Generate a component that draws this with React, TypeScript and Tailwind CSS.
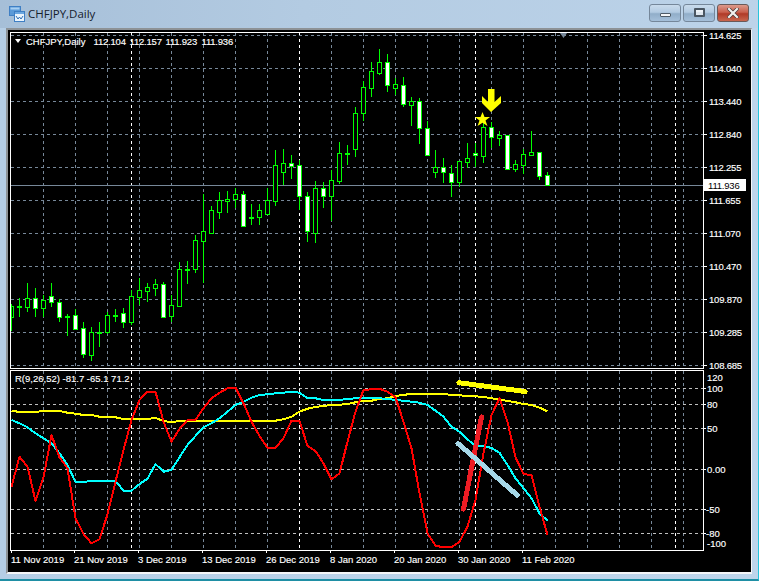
const candles: [number, number, number, number, number?][] = [
  [304, 331, 306, 317, 0], [298, 317, 306, 306, 0], [283, 312, 298, 307, 0], [288, 317, 298, 308, 1],
  [295, 317, 300, 308, 0], [283, 307, 296, 302, 1], [299, 322, 302, 317, 1], [314, 336, 316, 316, 0],
  [309, 330, 315, 329, 1], [322, 358, 328, 354, 1], [327, 361, 332, 355, 0], [322, 347, 332, 332, 0],
  [312, 334, 315, 332, 0], [309, 322, 315, 315, 0], [308, 328, 313, 322, 1], [290, 325, 296, 322, 0],
  [278, 305, 290, 297, 0], [283, 302, 287, 291, 0], [279, 296, 284, 288, 0], [282, 317, 284, 317, 1],
  [295, 322, 305, 316, 0], [262, 307, 269, 306, 0], [261, 284, 269, 269, 0], [235, 273, 240, 269, 0],
  [194, 283, 231, 241, 0], [206, 233, 210, 233, 0], [192, 219, 200, 212, 0], [191, 213, 199, 201, 0],
  [188, 208, 194, 199, 0], [191, 227, 194, 226, 1], [204, 225, 217, 217, 0], [204, 225, 210, 217, 0],
  [188, 215, 200, 214, 0], [150, 206, 165, 201, 0], [149, 185, 163, 172, 0], [155, 179, 163, 166, 1],
  [160, 210, 165, 196, 1], [192, 242, 196, 231, 1], [181, 243, 188, 233, 0], [182, 208, 188, 196, 1],
  [170, 221, 180, 196, 0], [142, 184, 153, 181, 0], [145, 165, 153, 153, 0], [107, 157, 113, 149, 0],
  [81, 121, 87, 113, 0], [62, 97, 71, 88, 0], [49, 75, 62, 73, 0], [54, 92, 62, 85, 1],
  [78, 95, 84, 88, 0], [77, 107, 85, 104, 1], [97, 126, 101, 105, 0], [98, 144, 101, 128, 1],
  [121, 155, 128, 155, 1], [150, 178, 167, 172, 0], [158, 183, 167, 172, 1], [165, 197, 173, 182, 1],
  [161, 187, 161, 182, 0], [143, 168, 158, 162, 0], [143, 167, 153, 155, 1], [122, 163, 127, 156, 0],
  [122, 148, 127, 137, 1], [131, 146, 135, 138, 0], [135, 169, 135, 169, 1], [160, 172, 164, 169, 0],
  [149, 174, 154, 165, 0], [131, 156, 152, 155, 0], [152, 180, 152, 176, 1], [172, 185, 175, 185, 1],
];

const red = [350, 260, 290, 393, 322, 195, 262, 295, 445, 492, 520, 508, 433, 335, 240, 150, 90, 65, 65, 155, 215, 177, 150, 150, 115, 85, 68, 55, 53, 100, 155, 198, 233, 233, 205, 152, 152, 228, 243, 280, 328, 310, 215, 125, 60, 58, 56, 65, 82, 155, 235, 370, 490, 527, 532, 532, 515, 470, 390, 250, 135, 85, 155, 262, 312, 316, 410, 495];
const cyan = [150, 160, 172, 190, 205, 220, 250, 285, 336, 336, 333, 332, 332, 332, 362, 362, 342, 326, 282, 305, 300, 262, 225, 198, 172, 160, 145, 125, 105, 95, 83, 75, 73, 70, 68, 65, 68, 85, 85, 90, 90, 90, 87, 85, 85, 85, 85, 87, 90, 92, 95, 98, 105, 122, 140, 170, 185, 208, 228, 228, 234, 248, 285, 325, 355, 385, 430, 452];
const yellow = [122, 126, 126, 126, 123, 122, 123, 128, 131, 135, 135, 140, 141, 142, 147, 147, 147, 147, 144, 153, 157, 153, 152, 152, 152, 152, 152, 152, 152, 152, 152, 152, 152, 152, 148, 140, 125, 116, 111, 108, 105, 104, 102, 97, 93, 92, 87, 85, 78, 75, 71, 71, 71, 71, 72, 75, 76, 78, 79, 81, 85, 88, 93, 97, 102, 105, 113, 124];

const pts = (vals: number[]) => vals.map((v, i) => `${11.5 + 8 * i},${(370 + v / 3).toFixed(1)}`).join(" ");

const gridX = Array.from({ length: 21 }, (_, i) => 43 + 32 * i);
const sepX = [131, 299, 475, 675];
const prices: [string, number][] = [
  ["114.625", 35], ["114.040", 68], ["113.440", 101], ["112.840", 134], ["112.255", 167], ["111.655", 200],
  ["111.070", 233], ["110.470", 266], ["109.870", 299], ["109.285", 332], ["108.685", 365],
];
const levels: [string, number, number][] = [
  ["100", 388, 707], ["80", 404, 707], ["50", 428, 707], ["0.00", 469, 707], ["-50", 509, 706], ["-80", 533, 706],
];
const dates: [string, number][] = [
  ["11 Nov 2019", 11], ["21 Nov 2019", 74], ["3 Dec 2019", 138], ["13 Dec 2019", 202], ["26 Dec 2019", 266],
  ["8 Jan 2020", 330], ["20 Jan 2020", 394], ["30 Jan 2020", 458], ["11 Feb 2020", 522],
];

function VerticalGrid({ y1, y2 }: { y1: number; y2: number }) {
  return (
    <g shapeRendering="crispEdges">
      {gridX.map((x) => (
        <line key={x} x1={x + 0.5} x2={x + 0.5} y1={y1} y2={y2} stroke="#778899" strokeDasharray="3 3" />
      ))}
      {sepX.map((x) => (
        <line key={x} x1={x + 0.5} x2={x + 0.5} y1={y1} y2={y2} stroke="#ffffff" strokeDasharray="3 3" />
      ))}
    </g>
  );
}

function PricePanel() {
  return (
    <svg className="block w-[742px] h-[339px] shrink-0 font-['Liberation_Sans',sans-serif] text-[9.5px]" viewBox="8 30 742 339">
      <VerticalGrid y1={33} y2={368} />
      <g shapeRendering="crispEdges">
        {prices.map(([, y]) => (
          <line key={y} x1={11} x2={703} y1={y + 0.5} y2={y + 0.5} stroke="#778899" strokeDasharray="3 3" />
        ))}
        <line x1={11} x2={703} y1={185.5} y2={185.5} stroke="#778899" />
        {candles.map(([wt, wb, bt, bb, fill], i) => {
          const x = 11 + 8 * i;
          const left = Math.max(x - 2, 11);
          const w = x + 2 - left;
          return (
            <g key={i}>
              <line x1={x + 0.5} x2={x + 0.5} y1={wt} y2={wb} stroke="#00ff00" />
              {bb - bt < 1 ? (
                <rect x={left} y={bt} width={5} height={2} fill="#00ff00" />
              ) : (
                <rect x={left + 0.5} y={bt + 0.5} width={w} height={bb - bt} fill={fill ? "#ffffff" : "#000000"} stroke="#00ff00" />
              )}
            </g>
          );
        })}
        <rect x={10.5} y={32.5} width={693} height={335.5} fill="none" stroke="#ffffff" />
        {prices.map(([, y]) => (
          <line key={y} x1={704} x2={707} y1={y + 0.5} y2={y + 0.5} stroke="#ffffff" />
        ))}
      </g>
      <polygon points="15,39 21,39 18,43" fill="#ffffff" />
      <g fill="#ffffff" stroke="#ffffff" strokeWidth={0.15}>
        <text x={26} y={44.5}>CHFJPY,Daily</text>
        <g className="tracking-[-0.2px]">
          <text x={93.5} y={44.5}>112.104</text>
          <text x={129.5} y={44.5}>112.157</text>
          <text x={165.5} y={44.5}>111.923</text>
          <text x={201.5} y={44.5}>111.936</text>
          {prices.map(([label, y]) => (
            <text key={y} x={709} y={y + 3.5}>{label}</text>
          ))}
        </g>
      </g>
      <polygon points="560,33 567,33 563.5,38" fill="#778899" />
      <polygon points="488,89 494.5,89 494.5,102 501,96 501,103 491,112 482,103 482,96 488,102" fill="#ffff00" />
      <polygon points="482.5,112 484.5,117 490,117 485.5,120.5 487.5,126 482.5,122.7 477.5,126 479.5,120.5 475,117 480.5,117" fill="#ffff00" />
      <rect x={704} y={179} width={42} height={12} fill="#ffffff" />
      <text x={708} y={188.5} fill="#000000" className="tracking-[-0.2px]">111.936</text>
    </svg>
  );
}

function IndicatorPanel() {
  return (
    <svg className="block w-[742px] h-[203px] shrink-0 font-['Liberation_Sans',sans-serif] text-[9.5px]" viewBox="8 369 742 203">
      <VerticalGrid y1={371} y2={550} />
      <g shapeRendering="crispEdges">
        {levels.map(([, y]) => (
          <line key={y} x1={11} x2={703} y1={y + 0.5} y2={y + 0.5} stroke="#c0c0c0" strokeDasharray="3 3" />
        ))}
      </g>
      <g fill="none" strokeWidth={2} shapeRendering="crispEdges" strokeLinejoin="round">
        <polyline points={pts(yellow)} stroke="#ffff00" />
        <polyline points={pts(cyan)} stroke="#00ffff" />
        <polyline points={pts(red)} stroke="#ff0000" />
      </g>
      <g strokeWidth={5} strokeLinecap="round" shapeRendering="crispEdges">
        <line x1={459} y1={382.7} x2={525} y2={391.5} stroke="#ffff00" />
        <line x1={481.5} y1={417} x2={463.5} y2={509} stroke="#ed1c24" />
        <line x1={458} y1={443.5} x2={517} y2={495} stroke="#a6d8e8" />
      </g>
      <g shapeRendering="crispEdges">
        <rect x={10.5} y={370.5} width={693} height={179.5} fill="none" stroke="#ffffff" />
        {levels.map(([, y]) => (
          <line key={y} x1={704} x2={706} y1={y + 0.5} y2={y + 0.5} stroke="#ffffff" />
        ))}
        {dates.map(([, x]) => (
          <line key={x} x1={x + 0.5} x2={x + 0.5} y1={550} y2={553} stroke="#ffffff" />
        ))}
      </g>
      <g fill="#ffffff" stroke="#ffffff" strokeWidth={0.15}>
        <text x={15} y={382}>R(9,26,52) -81.7 -65.1 71.2</text>
        <text x={707} y={381}>120</text>
        {levels.map(([label, y, x]) => (
          <text key={y} x={x} y={y + 4}>{label}</text>
        ))}
        <text x={707} y={547}>-100</text>
        {dates.map(([label, x]) => (
          <text key={x} x={x} y={563}>{label}</text>
        ))}
      </g>
    </svg>
  );
}

function TitleIcon() {
  return (
    <svg className="w-[16px] h-[16px] shrink-0" viewBox="0 0 16 16">
      <rect x={0.5} y={0.5} width={11} height={9} fill="#5b9ad8" stroke="#3f7fc4" />
      <rect x={1.5} y={1.5} width={9} height={2} fill="#a9d0f2" />
      <rect x={5.5} y={5.5} width={10} height={10} fill="#eaf4fd" stroke="#3f7fc4" />
      <rect x={6} y={6} width={9} height={2} fill="#6ba7e0" />
      <path d="M7 10 L9 13 L10.5 11 L12 13 L14 10" fill="none" stroke="#2f6fb5" />
    </svg>
  );
}

function WinButton({ kind }: { kind: "min" | "max" | "close" }) {
  if (kind === "close") {
    return (
      <div className="w-[32px] h-[18px] rounded-[3px] border border-[#6a5a5a] bg-[linear-gradient(#dc9a8c_0%,#c9604e_45%,#b03a28_55%,#c8664e_100%)] flex items-center justify-center">
        <svg className="w-[12px] h-[10px]" viewBox="0 0 12 10">
          <path d="M2 1 L10 9 M10 1 L2 9" stroke="#4a3a3a" strokeWidth={3.6} strokeLinecap="square" />
          <path d="M2 1 L10 9 M10 1 L2 9" stroke="#f0f0ee" strokeWidth={2.2} strokeLinecap="square" />
        </svg>
      </div>
    );
  }
  return (
    <div className="w-[32px] h-[18px] rounded-[3px] border border-[#75879a] bg-[linear-gradient(#c9dbec_0%,#b3cbe2_45%,#91aec9_55%,#a5c0da_100%)] flex items-center justify-center">
      {kind === "min" ? (
        <div className="w-[11px] h-[4px] mt-[4px] bg-[#f4f6f8] border border-[#4f5c68] rounded-[1px]" />
      ) : (
        <div className="w-[11px] h-[9px] bg-[#dfe7ef] border-2 border-[#4a5662] rounded-[1px]">
          <div className="w-full h-[2px] bg-[#eef3f8]" />
        </div>
      )}
    </div>
  );
}

export default function App() {
  return (
    <div className="w-[759px] h-[581px] flex flex-col overflow-hidden border-r border-b-2 border-r-[#27c4dc] border-b-[#1f8fa5] bg-[linear-gradient(90deg,#b5cee6,#bcd3ea_60%,#bed5eb)]">
      <div className="h-[28px] shrink-0 flex items-center pl-[9px] pr-[9px] bg-[linear-gradient(90deg,#a6bfd8,#b3cbe2_40%,#bcd3e9)]">
        <TitleIcon />
        <span className="ml-[3px] text-[11.5px] text-[#15202c] font-['Open_Sans',sans-serif]">CHFJPY,Daily</span>
        <div className="ml-auto flex gap-[2px] mb-[3px]">
          <WinButton kind="min" />
          <WinButton kind="max" />
          <WinButton kind="close" />
        </div>
      </div>
      <div className="ml-[6px] mr-[6px] mb-[4px] border-l-2 border-t-2 border-r border-b-2 border-l-[#8d9296] border-t-[#8d9296] border-r-[#f4f6f8] border-b-[#f4f6f8] bg-black flex flex-col">
        <PricePanel />
        <IndicatorPanel />
      </div>
    </div>
  );
}
